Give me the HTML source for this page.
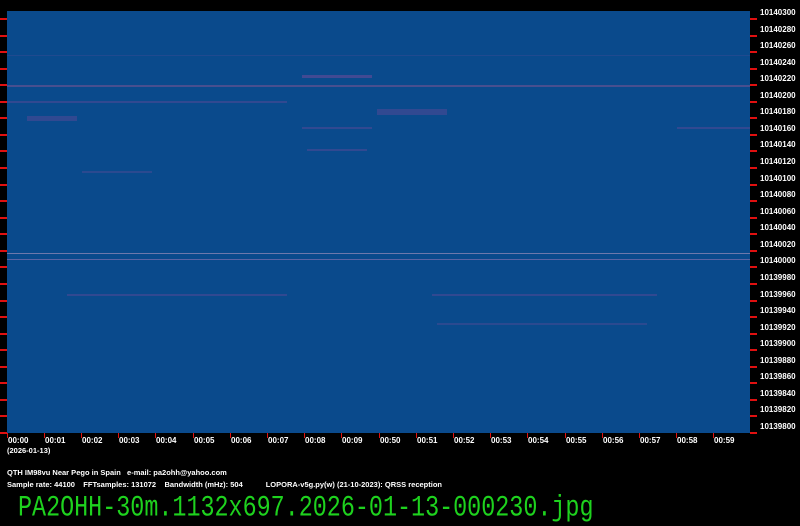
<!DOCTYPE html>
<html><head><meta charset="utf-8"><style>
body{margin:0;width:800px;height:525px;background:#000;overflow:hidden;position:relative;font-family:"Liberation Sans",sans-serif}
#plot{position:absolute;left:7px;top:11px;width:743px;height:422px;background:#0a4a8c;overflow:hidden}
.s{position:absolute;height:2px;background:#4b4a94;opacity:.85}
.t{position:absolute;width:7px;height:2px;background:#e01010}
.r{position:absolute;left:760px;color:#fff;font-size:8px;font-weight:bold}
.b{position:absolute;top:436px;color:#fff;font-size:8px;font-weight:bold}
.bt{position:absolute;top:433px;width:1px;height:5px;background:#e01010}
.txt{position:absolute;color:#fff;font-size:7.5px;font-weight:bold;white-space:pre}
#fn{position:absolute;left:18px;top:493px;color:#1ed21e;font-family:"Liberation Mono",monospace;font-size:23.4px;white-space:pre;transform:scaleY(1.25);transform-origin:0 0}
</style></head><body>
<div id="plot">
<div class="s" style="left:0;top:74px;width:743px;background:#54508f"></div>
<div class="s" style="left:295px;top:64px;width:70px;height:3px"></div>
<div class="s" style="left:0;top:90px;width:280px;opacity:.6"></div>
<div class="s" style="left:20px;top:105px;width:50px;height:5px;opacity:.6"></div>
<div class="s" style="left:370px;top:98px;width:70px;height:6px;opacity:.6"></div>
<div class="s" style="left:295px;top:116px;width:70px;opacity:.6"></div>
<div class="s" style="left:670px;top:116px;width:73px;opacity:.6"></div>
<div class="s" style="left:300px;top:138px;width:60px;opacity:.6"></div>
<div class="s" style="left:75px;top:160px;width:70px;opacity:.5"></div>
<div class="s" style="left:0;top:242px;width:743px;height:1px;background:#8080b0"></div>
<div class="s" style="left:0;top:248px;width:743px;height:1px;background:#6868a8"></div>
<div class="s" style="left:60px;top:283px;width:220px;opacity:.6"></div>
<div class="s" style="left:425px;top:283px;width:225px;opacity:.6"></div>
<div class="s" style="left:430px;top:312px;width:210px;opacity:.5"></div>
<div class="s" style="left:0;top:44px;width:743px;height:1px;opacity:.35"></div>
</div>
<div class="t" style="left:0;top:18px"></div><div class="t" style="left:0;top:35px"></div><div class="t" style="left:0;top:51px"></div><div class="t" style="left:0;top:68px"></div><div class="t" style="left:0;top:84px"></div><div class="t" style="left:0;top:101px"></div><div class="t" style="left:0;top:117px"></div><div class="t" style="left:0;top:134px"></div><div class="t" style="left:0;top:150px"></div><div class="t" style="left:0;top:167px"></div><div class="t" style="left:0;top:184px"></div><div class="t" style="left:0;top:200px"></div><div class="t" style="left:0;top:217px"></div><div class="t" style="left:0;top:233px"></div><div class="t" style="left:0;top:250px"></div><div class="t" style="left:0;top:266px"></div><div class="t" style="left:0;top:283px"></div><div class="t" style="left:0;top:300px"></div><div class="t" style="left:0;top:316px"></div><div class="t" style="left:0;top:333px"></div><div class="t" style="left:0;top:349px"></div><div class="t" style="left:0;top:366px"></div><div class="t" style="left:0;top:382px"></div><div class="t" style="left:0;top:399px"></div><div class="t" style="left:0;top:415px"></div><div class="t" style="left:0;top:432px"></div>
<div class="t" style="left:750px;top:18px"></div><div class="t" style="left:750px;top:35px"></div><div class="t" style="left:750px;top:51px"></div><div class="t" style="left:750px;top:68px"></div><div class="t" style="left:750px;top:84px"></div><div class="t" style="left:750px;top:101px"></div><div class="t" style="left:750px;top:117px"></div><div class="t" style="left:750px;top:134px"></div><div class="t" style="left:750px;top:150px"></div><div class="t" style="left:750px;top:167px"></div><div class="t" style="left:750px;top:184px"></div><div class="t" style="left:750px;top:200px"></div><div class="t" style="left:750px;top:217px"></div><div class="t" style="left:750px;top:233px"></div><div class="t" style="left:750px;top:250px"></div><div class="t" style="left:750px;top:266px"></div><div class="t" style="left:750px;top:283px"></div><div class="t" style="left:750px;top:300px"></div><div class="t" style="left:750px;top:316px"></div><div class="t" style="left:750px;top:333px"></div><div class="t" style="left:750px;top:349px"></div><div class="t" style="left:750px;top:366px"></div><div class="t" style="left:750px;top:382px"></div><div class="t" style="left:750px;top:399px"></div><div class="t" style="left:750px;top:415px"></div><div class="t" style="left:750px;top:432px"></div>
<div class="r" style="top:8px">10140300</div><div class="r" style="top:25px">10140280</div><div class="r" style="top:41px">10140260</div><div class="r" style="top:58px">10140240</div><div class="r" style="top:74px">10140220</div><div class="r" style="top:91px">10140200</div><div class="r" style="top:107px">10140180</div><div class="r" style="top:124px">10140160</div><div class="r" style="top:140px">10140140</div><div class="r" style="top:157px">10140120</div><div class="r" style="top:174px">10140100</div><div class="r" style="top:190px">10140080</div><div class="r" style="top:207px">10140060</div><div class="r" style="top:223px">10140040</div><div class="r" style="top:240px">10140020</div><div class="r" style="top:256px">10140000</div><div class="r" style="top:273px">10139980</div><div class="r" style="top:290px">10139960</div><div class="r" style="top:306px">10139940</div><div class="r" style="top:323px">10139920</div><div class="r" style="top:339px">10139900</div><div class="r" style="top:356px">10139880</div><div class="r" style="top:372px">10139860</div><div class="r" style="top:389px">10139840</div><div class="r" style="top:405px">10139820</div><div class="r" style="top:422px">10139800</div>
<div class="b" style="left:8px">00:00</div><div class="b" style="left:45px">00:01</div><div class="b" style="left:82px">00:02</div><div class="b" style="left:119px">00:03</div><div class="b" style="left:156px">00:04</div><div class="b" style="left:194px">00:05</div><div class="b" style="left:231px">00:06</div><div class="b" style="left:268px">00:07</div><div class="b" style="left:305px">00:08</div><div class="b" style="left:342px">00:09</div><div class="b" style="left:380px">00:50</div><div class="b" style="left:417px">00:51</div><div class="b" style="left:454px">00:52</div><div class="b" style="left:491px">00:53</div><div class="b" style="left:528px">00:54</div><div class="b" style="left:566px">00:55</div><div class="b" style="left:603px">00:56</div><div class="b" style="left:640px">00:57</div><div class="b" style="left:677px">00:58</div><div class="b" style="left:714px">00:59</div>
<div class="bt" style="left:7px"></div><div class="bt" style="left:44px"></div><div class="bt" style="left:81px"></div><div class="bt" style="left:118px"></div><div class="bt" style="left:155px"></div><div class="bt" style="left:193px"></div><div class="bt" style="left:230px"></div><div class="bt" style="left:267px"></div><div class="bt" style="left:304px"></div><div class="bt" style="left:341px"></div><div class="bt" style="left:379px"></div><div class="bt" style="left:416px"></div><div class="bt" style="left:453px"></div><div class="bt" style="left:490px"></div><div class="bt" style="left:527px"></div><div class="bt" style="left:565px"></div><div class="bt" style="left:602px"></div><div class="bt" style="left:639px"></div><div class="bt" style="left:676px"></div><div class="bt" style="left:713px"></div>
<div class="txt" style="left:7px;top:446px">(2026-01-13)</div>
<div class="txt" style="left:7px;top:468px">QTH IM98vu Near Pego in Spain   e-mail: pa2ohh@yahoo.com</div>
<div class="txt" style="left:7px;top:480px">Sample rate: 44100    FFTsamples: 131072    Bandwidth (mHz): 504           LOPORA-v5g.py(w) (21-10-2023): QRSS reception</div>
<div id="fn">PA2OHH-30m.1132x697.2026-01-13-000230.jpg</div>
</body></html>
